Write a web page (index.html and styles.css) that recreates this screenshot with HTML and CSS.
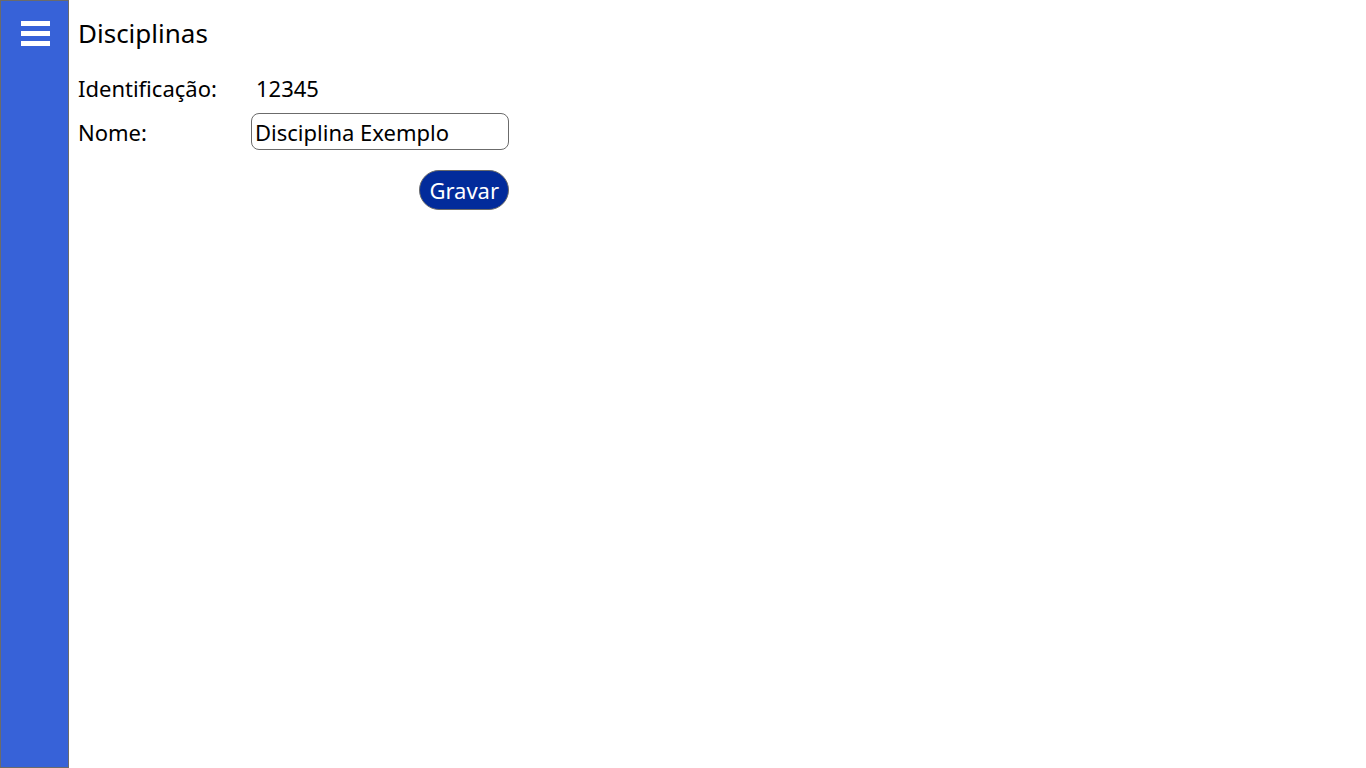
FILE: index.html
```html
<!DOCTYPE html>
<html lang="pt">
<head>
<meta charset="utf-8">
<title>Disciplinas</title>
<link rel="stylesheet" href="styles.css">
</head>
<body>
<div class="app">
  <nav class="sidebar">
    <button class="menu" aria-label="Menu">
      <span class="bar"></span><span class="bar"></span><span class="bar"></span>
    </button>
  </nav>
  <main class="content">
    <h1 class="title">Disciplinas</h1>
    <form class="form">
      <div class="row">
        <span class="label">Identificação:</span>
        <span class="value">12345</span>
      </div>
      <div class="row row-name">
        <label class="label" for="nome">Nome:</label>
        <input id="nome" class="input" type="text" value="Disciplina Exemplo">
      </div>
      <div class="actions">
        <button type="button" class="btn">Gravar</button>
      </div>
    </form>
  </main>
</div>
</body>
</html>
```
FILE: styles.css
```css
* { box-sizing: border-box; }
html, body { margin: 0; height: 100%; }
body {
  font-family: "Noto Sans", "Open Sans", "DejaVu Sans", sans-serif;
  color: #000;
  background: #fff;
}
.app { display: flex; height: 100vh; }
.sidebar {
  width: 69px;
  flex: none;
  background: #3762d8;
  border: 1px solid #6b6b6b;
  display: flex;
  flex-direction: column;
  padding: 20px 0 0 20px;
}
.menu {
  background: none;
  border: none;
  padding: 0;
  width: 29px;
  display: flex;
  flex-direction: column;
  gap: 5px;
  cursor: pointer;
}
.bar { display: block; height: 5px; background: #fff; width: 29px; }
.content { padding: 13px 0 0 9px; flex: 1; }
.title { font-size: 26px; font-weight: 400; margin: 0 0 17px; line-height: 40px; }
.form { width: 432px; display: flex; flex-direction: column; }
.row { display: grid; grid-template-columns: 173px 258px; align-items: center; }
.row-name { margin-top: 7px; }
.label, .value { font-size: 22px; line-height: 36px; }
.value { padding-left: 5px; }
.input {
  font: inherit;
  font-size: 22px;
  height: 37px;
  border: 1px solid #6b6b6b;
  border-radius: 8px;
  padding: 0 3px;
  color: #000;
}
.actions { display: flex; justify-content: flex-end; margin-top: 20px; width: 431px; }
.btn {
  font: inherit;
  font-size: 22px;
  color: #fff;
  background: #022b9b;
  border: 1px solid #6b6b6b;
  border-radius: 20px;
  height: 40px;
  padding: 0 9px;
  line-height: 1;
}
```
